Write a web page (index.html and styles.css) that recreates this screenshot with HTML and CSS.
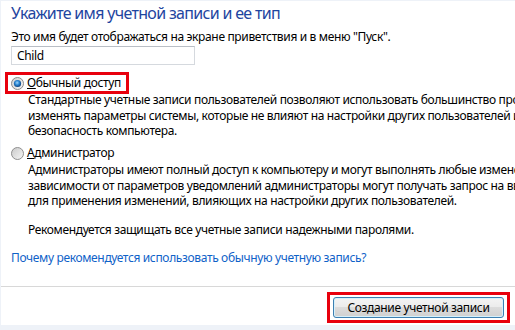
FILE: index.html
```html
<!DOCTYPE html>
<html lang="ru">
<head>
<meta charset="utf-8">
<link rel="stylesheet" href="styles.css">
</head>
<body>
<div class="panel">
  <h1 class="title">Укажите имя учетной записи и ее тип</h1>
  <p class="hint">Это имя будет отображаться на экране приветствия и в меню "Пуск".</p>
  <div class="input">Child</div>

  <div class="option option-std">
    <svg class="radio" width="13" height="13" viewBox="0 0 13 13">
      <defs>
        <radialGradient id="rg1" cx="45%" cy="40%" r="60%">
          <stop offset="0" stop-color="#9fd6fb"/>
          <stop offset="0.5" stop-color="#2a86d3"/>
          <stop offset="1" stop-color="#0b3f7a"/>
        </radialGradient>
        <linearGradient id="lg1" x1="0" y1="0" x2="1" y2="1">
          <stop offset="0" stop-color="#cfcfcf"/>
          <stop offset="1" stop-color="#f6f6f6"/>
        </linearGradient>
      </defs>
      <circle cx="6.5" cy="6.5" r="6" fill="url(#lg1)" stroke="#8a8a8a" stroke-width="1"/>
      <circle cx="6.5" cy="6.5" r="3.6" fill="url(#rg1)"/>
    </svg>
    <span class="label"><u>О</u>бычный доступ</span>
    <span class="mark mark-std"></span>
  </div>
  <div class="desc">
    <div class="line">Стандартные учетные записи пользователей позволяют использовать большинство программ и</div>
    <div class="line">изменять параметры системы, которые не влияют на настройки других пользователей и</div>
    <div class="line">безопасность компьютера.</div>
  </div>

  <div class="option option-admin">
    <svg class="radio" width="13" height="13" viewBox="0 0 13 13">
      <defs>
        <linearGradient id="lg2" x1="0" y1="0" x2="1" y2="1">
          <stop offset="0" stop-color="#c9c9c9"/>
          <stop offset="1" stop-color="#f7f7f7"/>
        </linearGradient>
      </defs>
      <circle cx="6.5" cy="6.5" r="6" fill="url(#lg2)" stroke="#8f8f8f" stroke-width="1"/>
    </svg>
    <span class="label"><u>А</u>дминистратор</span>
  </div>
  <div class="desc">
    <div class="line">Администраторы имеют полный доступ к компьютеру и могут выполнять любые изменения. В</div>
    <div class="line">зависимости от параметров уведомлений администраторы могут получать запрос на ввод пароля или подтверждение</div>
    <div class="line">для применения изменений, влияющих на настройки других пользователей.</div>
  </div>

  <p class="note">Рекомендуется защищать все учетные записи надежными паролями.</p>
  <a class="link" href="#">Почему рекомендуется использовать обычную учетную запись?</a>

  <div class="footer">
    <div class="btn-wrap">
      <button class="btn">Создание учетной записи</button>
      <span class="mark mark-btn"></span>
    </div>
  </div>
</div>
</body>
</html>
```

FILE: styles.css
```css
html, body {
  margin: 0;
  padding: 0;
}
body {
  width: 515px;
  height: 330px;
  overflow: hidden;
  background: #eef2f8;
  font-family: "Segoe UI", "Noto Sans", "Open Sans", sans-serif;
  font-size: 12px;
  letter-spacing: -0.35px;
  color: #000;
}
.panel {
  margin: 1px 0 0 1px;
  height: 324px;
  background: #ffffff;
  padding: 2px 0 0 10px;
  box-sizing: border-box;
  display: flex;
  flex-direction: column;
  align-items: flex-start;
  white-space: nowrap;
  overflow: hidden;
}
.title {
  margin: 0;
  font-size: 16px;
  font-weight: normal;
  line-height: 20px;
  letter-spacing: -0.68px;
  color: #1e45a0;
}
.hint {
  margin: 6px 0 0;
  line-height: 15.5px;
}
.input {
  margin-top: 1.5px;
  width: 184px;
  height: 19px;
  box-sizing: border-box;
  border: 1px solid #d5d9de;
  border-top-color: #b9bec5;
  padding: 0 5px;
  line-height: 17px;
  font-size: 12px;
}
.option {
  position: relative;
  display: flex;
  align-items: center;
  gap: 3px;
  height: 15.5px;
  line-height: 15.5px;
}
.option-std {
  margin-top: 10.25px;
}
.option-admin {
  margin-top: 6.5px;
}
.radio {
  display: block;
  flex: none;
}
.label u {
  text-decoration-thickness: 1px;
}
.mark {
  position: absolute;
  border: 3px solid #e8000d;
  box-sizing: border-box;
  pointer-events: none;
}
.mark-std {
  left: -6px;
  top: -3px;
  width: 124px;
  height: 22px;
}
.desc {
  margin-top: 1.5px;
  padding-left: 17px;
  line-height: 15.5px;
}
.note {
  margin: 13.5px 0 0;
  padding-left: 17px;
  line-height: 15.5px;
}
.link {
  margin-top: 12.5px;
  line-height: 15.5px;
  color: #0f62c8;
  text-decoration: none;
}
.footer {
  margin-top: 20px;
  margin-left: -10px;
  width: 514px;
  border-top: 1px solid #d8d8d8;
  display: flex;
  justify-content: flex-end;
  padding: 10px 11px 0 0;
  box-sizing: border-box;
}
.btn-wrap {
  position: relative;
}
.btn {
  display: block;
  width: 171px;
  height: 21px;
  padding: 0;
  font-family: inherit;
  font-size: 12px;
  letter-spacing: -0.35px;
  color: #000;
  border: 1px solid #3c7fb1;
  border-radius: 3px;
  background: linear-gradient(#f4f4f4 0%, #ececec 45%, #dcdcdc 50%, #d0d0d0 100%);
  box-shadow: inset 0 0 0 1px #d6f0fb;
}
.mark-btn {
  left: -6px;
  top: -5px;
  width: 183px;
  height: 31px;
}
```
